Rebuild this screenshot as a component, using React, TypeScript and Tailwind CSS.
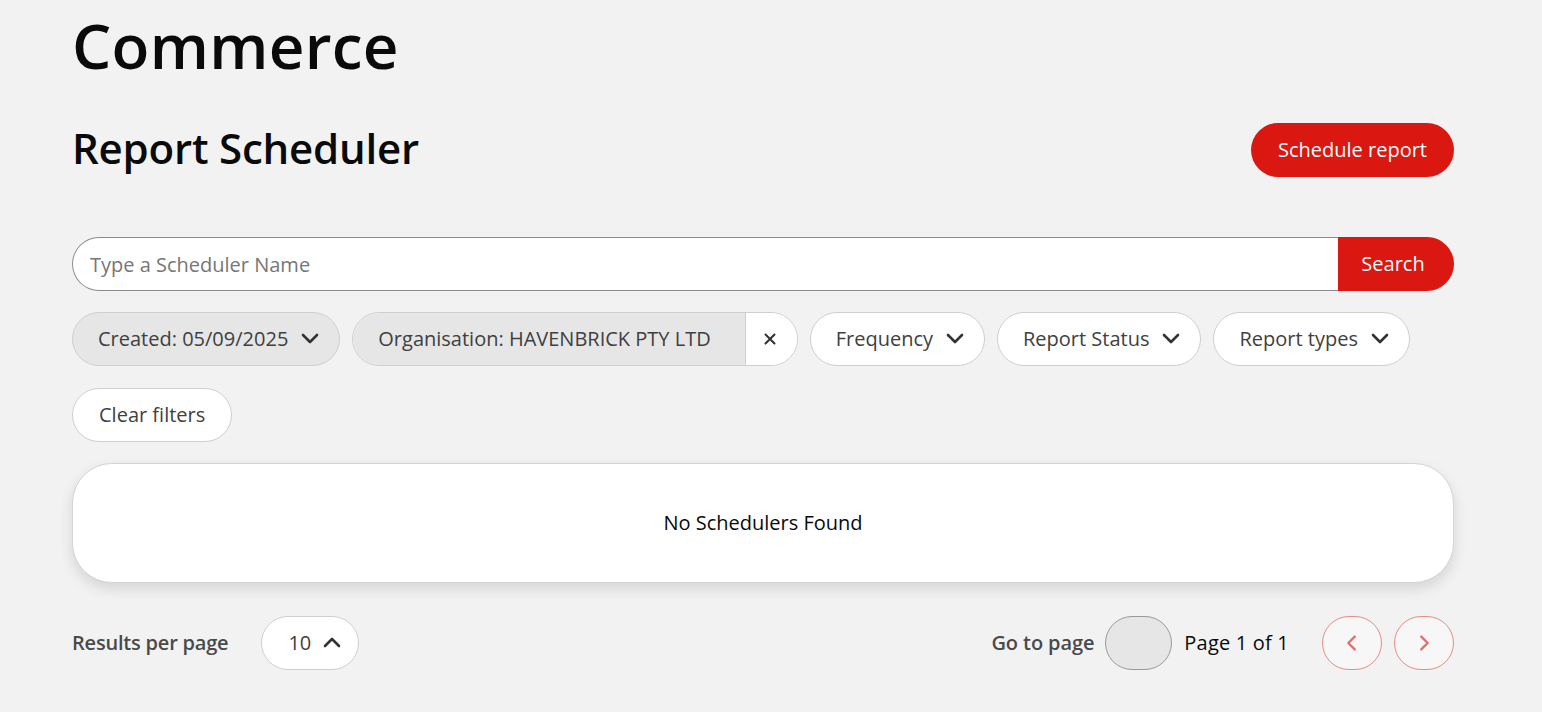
import React, { useState } from 'react';

const Chevron: React.FC<{ dir?: 'down' | 'up' | 'left' | 'right'; className?: string }> = ({
  dir = 'down',
  className = '',
}) => {
  const paths: Record<string, string> = {
    down: 'M5 8l7 7 7-7',
    up: 'M5 15l7-7 7 7',
    left: 'M15 5l-7 7 7 7',
    right: 'M9 5l7 7-7 7',
  };
  return (
    <svg viewBox="0 0 24 24" fill="none" stroke="currentColor" strokeWidth={2.6} strokeLinecap="round" strokeLinejoin="round" className={className}>
      <path d={paths[dir]} />
    </svg>
  );
};

const FilterChip: React.FC<{ label: string; active?: boolean }> = ({ label, active }) => (
  <button
    className={`flex h-[54px] items-center gap-[10px] rounded-full border border-[#cfcfcf] pl-[25px] pr-[17px] text-[20px] text-[#404040] ${
      active ? 'bg-[#e6e6e6]' : 'bg-white'
    }`}
  >
    <span>{label}</span>
    <Chevron className="h-[24px] w-[24px] text-[#333]" />
  </button>
);

const App: React.FC = () => {
  const [query, setQuery] = useState('');

  return (
    <div className="min-h-[712px] bg-[#f2f2f2] font-['Open_Sans',sans-serif]">
      <div className="w-[1382px] ml-[72px] pt-[2px]">
        <h1 className="text-[62px] leading-[86px] font-semibold text-[#0a0a0a] tracking-[0.3px]">Commerce</h1>

        <div className="mt-[28px] flex items-center justify-between">
          <h2 className="text-[42px] leading-[64px] font-semibold text-[#0a0a0a] tracking-[-0.2px]">Report Scheduler</h2>
          <button className="mt-[4px] h-[54px] w-[203px] rounded-full bg-[#da1710] text-[20px] text-white">
            Schedule report
          </button>
        </div>

        <div className="mt-[57px] flex h-[54px]">
          <input
            className="h-full flex-1 rounded-l-full border border-r-0 border-[#8c8c8c] bg-white pl-[17px] text-[20px] text-[#333] placeholder-[#767676] outline-none"
            placeholder="Type a Scheduler Name"
            value={query}
            onChange={e => setQuery(e.target.value)}
          />
          <button className="h-full w-[116px] rounded-r-full bg-[#da1710] pr-[6px] text-[20px] text-white">Search</button>
        </div>

        <div className="mt-[21px] flex flex-wrap gap-x-[12px] gap-y-[22px]">
          <FilterChip label="Created: 05/09/2025" active />
          <div className="flex h-[54px] overflow-hidden rounded-full border border-[#cfcfcf] text-[20px] text-[#404040]">
            <span className="flex items-center bg-[#e6e6e6] pl-[25px] pr-[34px]">Organisation: HAVENBRICK PTY LTD</span>
            <button className="flex w-[52px] items-center justify-center border-l border-[#cfcfcf] bg-white pr-[3px]">
              <svg viewBox="0 0 24 24" className="h-[18px] w-[18px] text-[#333]" fill="none" stroke="currentColor" strokeWidth={2.8} strokeLinecap="round">
                <path d="M6 6l12 12M18 6L6 18" />
              </svg>
            </button>
          </div>
          <FilterChip label="Frequency" />
          <FilterChip label="Report Status" />
          <FilterChip label="Report types" />
          <button className="h-[54px] rounded-full border border-[#cfcfcf] bg-white px-[26px] text-[20px] text-[#404040]">
            Clear filters
          </button>
        </div>

        <div className="mt-[21px] flex h-[120px] items-center justify-center rounded-[40px] border border-[#d4d4d4] bg-white shadow-[0_6px_14px_rgba(0,0,0,0.12)]">
          <span className="text-[20px] text-[#0a0a0a]">No Schedulers Found</span>
        </div>

        <div className="mt-[33px] flex items-center justify-between">
          <div className="flex items-center gap-[33px]">
            <span className="text-[20px] font-semibold text-[#4a4a4a] tracking-[-0.2px]">Results per page</span>
            <button className="flex h-[54px] w-[98px] items-center gap-[9px] rounded-full border border-[#cfcfcf] bg-white pl-[26px] text-[20px] text-[#404040]">
              <span>10</span>
              <Chevron dir="up" className="h-[24px] w-[24px] text-[#333]" />
            </button>
          </div>
          <div className="flex items-center">
            <span className="text-[20px] font-semibold text-[#4a4a4a] tracking-[-0.1px]">Go to page</span>
            <input className="ml-[11px] h-[54px] w-[67px] rounded-full border border-[#9a9a9a] bg-[#e6e6e6] text-center text-[20px] outline-none" />
            <span className="ml-[12px] text-[20px] text-[#0a0a0a] tracking-[0.2px]">Page 1 of 1</span>
            <button className="ml-[33px] flex h-[54px] w-[60px] items-center justify-center rounded-full border border-[#ea8a85] bg-[#f7f7f7] text-[#e2716b]">
              <Chevron dir="left" className="h-[22px] w-[22px]" />
            </button>
            <button className="ml-[12px] flex h-[54px] w-[60px] items-center justify-center rounded-full border border-[#ea8a85] bg-[#f7f7f7] text-[#e2716b]">
              <Chevron dir="right" className="h-[22px] w-[22px]" />
            </button>
          </div>
        </div>
      </div>
    </div>
  );
};

export default App;
